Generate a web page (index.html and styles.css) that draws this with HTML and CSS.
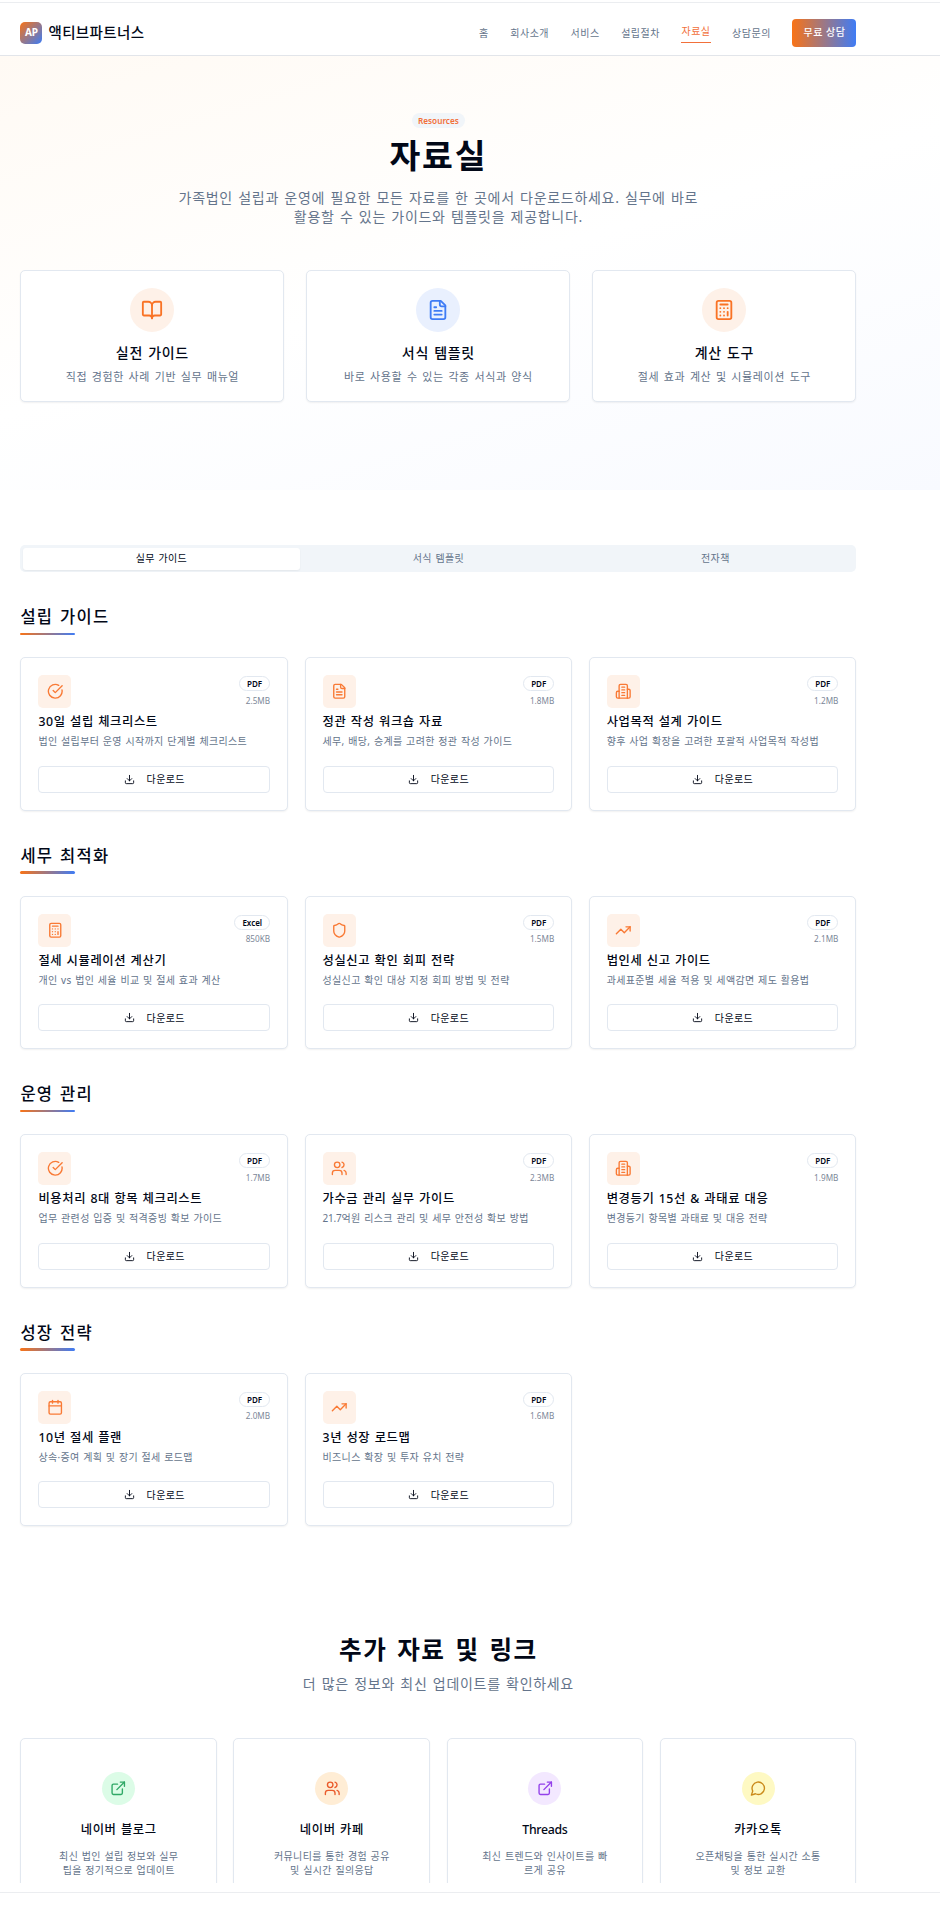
FILE: index.html
```html
<!DOCTYPE html>
<html lang="ko">
<head>
<meta charset="utf-8">
<title>자료실 - 액티브파트너스</title>
<link rel="stylesheet" href="styles.css">
</head>
<body>
<svg class="sprite" aria-hidden="true">
  <symbol id="book" viewBox="0 0 24 24"><path d="M12 7v14"/><path d="M3 18a1 1 0 0 1-1-1V4a1 1 0 0 1 1-1h5a4 4 0 0 1 4 4 4 4 0 0 1 4-4h5a1 1 0 0 1 1 1v13a1 1 0 0 1-1 1h-6a3 3 0 0 0-3 3 3 3 0 0 0-3-3z"/></symbol>
  <symbol id="file" viewBox="0 0 24 24"><path d="M15 2H6a2 2 0 0 0-2 2v16a2 2 0 0 0 2 2h12a2 2 0 0 0 2-2V7Z"/><path d="M14 2v4a2 2 0 0 0 2 2h4"/><path d="M10 9H8"/><path d="M16 13H8"/><path d="M16 17H8"/></symbol>
  <symbol id="calc" viewBox="0 0 24 24"><rect width="16" height="20" x="4" y="2" rx="2"/><path d="M8 6h8"/><path d="M16 14v4"/><path d="M16 10h.01"/><path d="M12 10h.01"/><path d="M8 10h.01"/><path d="M12 14h.01"/><path d="M8 14h.01"/><path d="M12 18h.01"/><path d="M8 18h.01"/></symbol>
  <symbol id="check" viewBox="0 0 24 24"><path d="M21.801 10A10 10 0 1 1 17 3.335"/><path d="m9 11 3 3L22 4"/></symbol>
  <symbol id="building" viewBox="0 0 24 24"><path d="M6 22V4a2 2 0 0 1 2-2h8a2 2 0 0 1 2 2v18Z"/><path d="M6 12H4a2 2 0 0 0-2 2v6a2 2 0 0 0 2 2h2"/><path d="M18 9h2a2 2 0 0 1 2 2v9a2 2 0 0 1-2 2h-2"/><path d="M10 6h4"/><path d="M10 10h4"/><path d="M10 14h4"/><path d="M10 18h4"/></symbol>
  <symbol id="shield" viewBox="0 0 24 24"><path d="M20 13c0 5-3.5 7.5-7.66 8.95a1 1 0 0 1-.67-.01C7.5 20.5 4 18 4 13V6a1 1 0 0 1 1-1c2 0 4.500-1.200 6.240-2.720a1.170 1.170 0 0 1 1.520 0C14.510 3.810 17 5 19 5a1 1 0 0 1 1 1z"/></symbol>
  <symbol id="trend" viewBox="0 0 24 24"><path d="M22 7 13.500 15.500 8.500 10.500 2 17"/><path d="M16 7h6v6"/></symbol>
  <symbol id="users" viewBox="0 0 24 24"><path d="M16 21v-2a4 4 0 0 0-4-4H6a4 4 0 0 0-4 4v2"/><circle cx="9" cy="7" r="4"/><path d="M22 21v-2a4 4 0 0 0-3-3.870"/><path d="M16 3.130a4 4 0 0 1 0 7.750"/></symbol>
  <symbol id="calendar" viewBox="0 0 24 24"><path d="M8 2v4"/><path d="M16 2v4"/><rect width="18" height="18" x="3" y="4" rx="2"/><path d="M3 10h18"/></symbol>
  <symbol id="download" viewBox="0 0 24 24"><path d="M21 15v4a2 2 0 0 1-2 2H5a2 2 0 0 1-2-2v-4"/><path d="m7 10 5 5 5-5"/><path d="M12 15V3"/></symbol>
  <symbol id="external" viewBox="0 0 24 24"><path d="M15 3h6v6"/><path d="M10 14 21 3"/><path d="M18 13v6a2 2 0 0 1-2 2H5a2 2 0 0 1-2-2V8a2 2 0 0 1 2-2h6"/></symbol>
  <symbol id="chat" viewBox="0 0 24 24"><path d="M7.900 20A9 9 0 1 0 4 16.100L2 22Z"/></symbol>
</svg>

<div class="page">
  <header class="header">
    <div class="container header-row">
      <div class="brand"><span class="logo">AP</span><span class="brand-name">액티브파트너스</span></div>
      <nav class="nav">
        <a>홈</a><a>회사소개</a><a>서비스</a><a>설립절차</a><a class="active">자료실</a><a>상담문의</a>
        <span class="cta">무료 상담</span>
      </nav>
    </div>
  </header>

  <section class="hero">
    <div class="container">
      <div class="hero-text">
        <span class="tag">Resources</span>
        <h1>자료실</h1>
        <p class="lead">가족법인 설립과 운영에 필요한 모든 자료를 한 곳에서 다운로드하세요. 실무에 바로<br>활용할 수 있는 가이드와 템플릿을 제공합니다.</p>
      </div>
      <div class="features">
        <div class="card feature"><span class="disc"><svg><use href="#book"/></svg></span><h3>실전 가이드</h3><p>직접 경험한 사례 기반 실무 매뉴얼</p></div>
        <div class="card feature"><span class="disc blue"><svg><use href="#file"/></svg></span><h3>서식 템플릿</h3><p>바로 사용할 수 있는 각종 서식과 양식</p></div>
        <div class="card feature"><span class="disc"><svg><use href="#calc"/></svg></span><h3>계산 도구</h3><p>절세 효과 계산 및 시뮬레이션 도구</p></div>
      </div>
    </div>
  </section>

  <main class="container main">
    <div class="tabs"><span class="tab on">실무 가이드</span><span class="tab">서식 템플릿</span><span class="tab">전자책</span></div>

    <section class="group">
      <h2>설립 가이드</h2>
      <div class="grid">
        <article class="card item">
          <div class="top"><span class="tile"><svg><use href="#check"/></svg></span><div class="meta"><span class="pill">PDF</span><span class="size">2.5MB</span></div></div>
          <h3>30일 설립 체크리스트</h3><p>법인 설립부터 운영 시작까지 단계별 체크리스트</p>
          <div class="btn"><svg><use href="#download"/></svg><span>다운로드</span></div>
        </article>
        <article class="card item">
          <div class="top"><span class="tile"><svg><use href="#file"/></svg></span><div class="meta"><span class="pill">PDF</span><span class="size">1.8MB</span></div></div>
          <h3>정관 작성 워크숍 자료</h3><p>세무, 배당, 승계를 고려한 정관 작성 가이드</p>
          <div class="btn"><svg><use href="#download"/></svg><span>다운로드</span></div>
        </article>
        <article class="card item">
          <div class="top"><span class="tile"><svg><use href="#building"/></svg></span><div class="meta"><span class="pill">PDF</span><span class="size">1.2MB</span></div></div>
          <h3>사업목적 설계 가이드</h3><p>향후 사업 확장을 고려한 포괄적 사업목적 작성법</p>
          <div class="btn"><svg><use href="#download"/></svg><span>다운로드</span></div>
        </article>
      </div>
    </section>

    <section class="group">
      <h2>세무 최적화</h2>
      <div class="grid">
        <article class="card item">
          <div class="top"><span class="tile"><svg><use href="#calc"/></svg></span><div class="meta"><span class="pill">Excel</span><span class="size">850KB</span></div></div>
          <h3>절세 시뮬레이션 계산기</h3><p>개인 vs 법인 세율 비교 및 절세 효과 계산</p>
          <div class="btn"><svg><use href="#download"/></svg><span>다운로드</span></div>
        </article>
        <article class="card item">
          <div class="top"><span class="tile"><svg><use href="#shield"/></svg></span><div class="meta"><span class="pill">PDF</span><span class="size">1.5MB</span></div></div>
          <h3>성실신고 확인 회피 전략</h3><p>성실신고 확인 대상 지정 회피 방법 및 전략</p>
          <div class="btn"><svg><use href="#download"/></svg><span>다운로드</span></div>
        </article>
        <article class="card item">
          <div class="top"><span class="tile"><svg><use href="#trend"/></svg></span><div class="meta"><span class="pill">PDF</span><span class="size">2.1MB</span></div></div>
          <h3>법인세 신고 가이드</h3><p>과세표준별 세율 적용 및 세액감면 제도 활용법</p>
          <div class="btn"><svg><use href="#download"/></svg><span>다운로드</span></div>
        </article>
      </div>
    </section>

    <section class="group">
      <h2>운영 관리</h2>
      <div class="grid">
        <article class="card item">
          <div class="top"><span class="tile"><svg><use href="#check"/></svg></span><div class="meta"><span class="pill">PDF</span><span class="size">1.7MB</span></div></div>
          <h3>비용처리 8대 항목 체크리스트</h3><p>업무 관련성 입증 및 적격증빙 확보 가이드</p>
          <div class="btn"><svg><use href="#download"/></svg><span>다운로드</span></div>
        </article>
        <article class="card item">
          <div class="top"><span class="tile"><svg><use href="#users"/></svg></span><div class="meta"><span class="pill">PDF</span><span class="size">2.3MB</span></div></div>
          <h3>가수금 관리 실무 가이드</h3><p><span class="num">21.7</span>억원 리스크 관리 및 세무 안전성 확보 방법</p>
          <div class="btn"><svg><use href="#download"/></svg><span>다운로드</span></div>
        </article>
        <article class="card item">
          <div class="top"><span class="tile"><svg><use href="#building"/></svg></span><div class="meta"><span class="pill">PDF</span><span class="size">1.9MB</span></div></div>
          <h3>변경등기 15선 &amp; 과태료 대응</h3><p>변경등기 항목별 과태료 및 대응 전략</p>
          <div class="btn"><svg><use href="#download"/></svg><span>다운로드</span></div>
        </article>
      </div>
    </section>

    <section class="group">
      <h2>성장 전략</h2>
      <div class="grid">
        <article class="card item">
          <div class="top"><span class="tile"><svg><use href="#calendar"/></svg></span><div class="meta"><span class="pill">PDF</span><span class="size">2.0MB</span></div></div>
          <h3>10년 절세 플랜</h3><p>상속·증여 계획 및 장기 절세 로드맵</p>
          <div class="btn"><svg><use href="#download"/></svg><span>다운로드</span></div>
        </article>
        <article class="card item">
          <div class="top"><span class="tile"><svg><use href="#trend"/></svg></span><div class="meta"><span class="pill">PDF</span><span class="size">1.6MB</span></div></div>
          <h3>3년 성장 로드맵</h3><p>비즈니스 확장 및 투자 유치 전략</p>
          <div class="btn"><svg><use href="#download"/></svg><span>다운로드</span></div>
        </article>
      </div>
    </section>
  </main>

  <section class="container more">
    <h2>추가 자료 및 링크</h2>
    <p class="sub">더 많은 정보와 최신 업데이트를 확인하세요</p>
    <div class="links">
      <div class="card link"><span class="dot green"><svg><use href="#external"/></svg></span><h3>네이버 블로그</h3><p>최신 법인 설립 정보와 실무<br>팁을 정기적으로 업데이트</p></div>
      <div class="card link"><span class="dot orange"><svg><use href="#users"/></svg></span><h3>네이버 카페</h3><p>커뮤니티를 통한 경험 공유<br>및 실시간 질의응답</p></div>
      <div class="card link"><span class="dot purple"><svg><use href="#external"/></svg></span><h3 class="latin">Threads</h3><p>최신 트렌드와 인사이트를 빠<br>르게 공유</p></div>
      <div class="card link"><span class="dot yellow"><svg><use href="#chat"/></svg></span><h3>카카오톡</h3><p>오픈채팅을 통한 실시간 소통<br>및 정보 교환</p></div>
    </div>
  </section>
</div>
<div class="endline"></div>
</body>
</html>
```

FILE: styles.css
```css
* { box-sizing: border-box; }
body {
  margin: 0;
  background: #fff;
  color: #020817;
  font-family: "Noto Sans", "Noto Sans CJK KR", sans-serif;
  font-size: 10px;
  height: 1910px;
  overflow: hidden;
}
h1, h2, h3, p { margin: 0; white-space: nowrap; }
.sprite { display: none; }
svg { fill: none; stroke: currentColor; stroke-width: 2; stroke-linecap: round; stroke-linejoin: round; display: block; }
.page { height: 1883px; overflow: hidden; border-top: 1px solid #fff; }
.container { width: 836px; margin-left: 20.400px; }
.endline { margin-top: 9px; height: 1px; background: #ebedf0; }

/* Header */
.header { height: 54px; margin-top: 1px; border-top: 1px solid #ebedf0; border-bottom: 1px solid #e2e5ea; }
.header-row { display: flex; justify-content: space-between; align-items: center; height: 60px; }
.brand { display: flex; align-items: center; gap: 6px; }
.logo {
  width: 22px; height: 22px; border-radius: 5px;
  background: linear-gradient(135deg, #f97316, #3b7cf6);
  color: #fff; font-size: 10px; font-weight: 700; line-height: 21px; text-align: center; letter-spacing: -.2px;
}
.brand-name { font-size: 14.500px; font-weight: 500; letter-spacing: .4px; line-height: 20px; padding-bottom: 2px; }
.nav { display: flex; align-items: center; gap: 21.800px; color: #64748b; letter-spacing: .5px; line-height: 16px; }
.nav a { margin-right: -.3px; padding-bottom: 1px; }
.nav .active { color: #f2703a; border-bottom: 1px solid #f2703a; padding-bottom: 3px; }
.cta {
  width: 64px; height: 28px; border-radius: 4px; line-height: 26px; text-align: center;
  background: linear-gradient(90deg, #f97316, #3f7cf5); color: #fff; font-weight: 500;
}

/* Hero */
.hero { height: 434px; padding-top: 56.500px; background: linear-gradient(163deg, #fffaf4 0%, #fff 50%, #f8faff 100%); }
.hero-text { text-align: center; }
.tag {
  display: block; width: 53px; height: 15px; margin: 0 auto; border-radius: 8px;
  background: #f1f5f9; color: #f2703a; font-size: 8.200px; font-weight: 600; line-height: 15px;
}
.hero h1 { margin-top: 7px; font-size: 33.500px; font-weight: 700; line-height: 41px; letter-spacing: 1.800px; }
.lead { margin-top: 12px; color: #64748b; font-size: 14px; line-height: 19px; letter-spacing: .7px; word-spacing: 1px; }
.features { display: grid; grid-template-columns: repeat(3, 1fr); gap: 22px; margin-top: 44.500px; }
.card { border: 1px solid #e2e8f0; border-radius: 5px; background: #fff; box-shadow: 0 1px 2px rgba(0, 0, 0, .06); }
.feature { height: 132px; padding-top: 17px; text-align: center; }
.disc { display: flex; align-items: center; justify-content: center; width: 44px; height: 44px; margin: 0 auto; border-radius: 50%; background: #fef1e8; color: #f97325; }
.disc svg { width: 22px; height: 22px; }
.disc.blue { background: #e9f0fe; color: #3f7cf5; }
.feature h3 { margin-top: 10.500px; font-size: 14px; font-weight: 500; line-height: 20px; letter-spacing: .7px; word-spacing: .8px; }
.feature p { margin-top: 6px; color: #64748b; font-size: 11px; line-height: 16px; letter-spacing: .6px; word-spacing: 1.200px; }

/* Guides */
.main { padding-top: 55px; }
.tabs { display: grid; grid-template-columns: repeat(3, 1fr); height: 27px; padding: 2.500px; border-radius: 5px; background: #f1f5f9; color: #64748b; }
.tab { border-radius: 3px; line-height: 20px; text-align: center; letter-spacing: .35px; word-spacing: .6px; }
.on { background: #fff; color: #020817; box-shadow: 0 1px 2px rgba(0, 0, 0, .06); }
.group { margin-top: 33px; height: 205.500px; }
.group h2 { font-size: 16.500px; font-weight: 500; line-height: 24px; letter-spacing: 1.300px; word-spacing: 1px; }
.group h2::after { content: ""; display: block; width: 55px; height: 2.700px; margin-top: 3.500px; border-radius: 2px; background: linear-gradient(90deg, #f97316, #3f7cf5); }
.grid { display: grid; grid-template-columns: repeat(3, 1fr); gap: 16.400px; margin-top: 21.900px; }
.item { height: 153.500px; padding: 17px; }
.top { display: flex; justify-content: space-between; }
.tile { display: flex; align-items: center; justify-content: center; width: 33px; height: 33px; border-radius: 5px; background: #fef1e8; color: #f97a35; }
.tile svg, .dot svg { width: 16.500px; height: 16.500px; }
.meta { display: flex; flex-direction: column; align-items: flex-end; padding-top: 1px; }
.pill { height: 15px; padding: 0 7px; border: 1px solid #e2e8f0; border-radius: 8px; font-size: 8px; font-weight: 600; line-height: 13px; }
.size { margin-top: 3.500px; color: #7c8798; font-size: 8.200px; line-height: 12px; }
.item h3 { margin-top: 5px; font-size: 12.300px; font-weight: 500; line-height: 18px; letter-spacing: .6px; word-spacing: .6px; }
.item p { margin-top: 3px; color: #64748b; font-size: 10px; line-height: 15px; letter-spacing: .35px; word-spacing: .6px; }
.num { letter-spacing: -.2px; }
.btn { display: flex; align-items: center; justify-content: center; gap: 12px; height: 27px; margin-top: 16.500px; border: 1px solid #e2e8f0; border-radius: 4px; letter-spacing: .4px; line-height: 16px; }
.btn svg { width: 11px; height: 11px; }

/* Extra links */
.more { padding-top: 108px; text-align: center; }
.more h2 { font-size: 24.600px; font-weight: 700; line-height: 32px; letter-spacing: 1.500px; word-spacing: 2px; }
.sub { margin-top: 8px; color: #64748b; font-size: 14px; line-height: 20px; letter-spacing: .7px; word-spacing: 1px; }
.links { display: grid; grid-template-columns: repeat(4, 1fr); gap: 16.400px; margin-top: 44px; }
.link { height: 190px; padding-top: 33px; }
.dot { display: flex; align-items: center; justify-content: center; width: 33px; height: 33px; margin: 0 auto; border-radius: 50%; }
.green { background: #dcfce7; color: #2fa866; }
.orange { background: #ffedd5; color: #ea5b2c; }
.purple { background: #f3e8ff; color: #9340ea; }
.yellow { background: #fef9c3; color: #ca8a1a; }
.link h3 { margin-top: 16px; font-size: 12.300px; font-weight: 500; line-height: 18px; letter-spacing: .6px; word-spacing: .6px; }
.link .latin { font-weight: 500; letter-spacing: -.3px; }
.link p { margin-top: 10px; color: #64748b; font-size: 10px; line-height: 14px; letter-spacing: .35px; word-spacing: .6px; }
```
